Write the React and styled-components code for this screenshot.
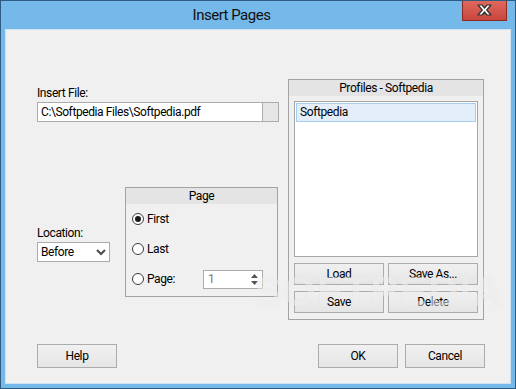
import styled, { createGlobalStyle } from 'styled-components';

const Global = createGlobalStyle`
  html, body { margin: 0; padding: 0; background: #ffffff; }
  * { box-sizing: border-box; }
`;

const ui = `Roboto, "Noto Sans", "Liberation Sans", sans-serif`;

// window chrome
const Window = styled.div`
  position: relative;
  width: 516px;
  height: 389px;
  border: 1px solid #2e5b7f;
  background: #75b9ea;
  display: flex;
  flex-direction: column;
  font-family: ${ui};
  font-size: 12px;
  letter-spacing: -0.4px;
  color: #000;
  overflow: hidden;
`;

const TitleBar = styled.div`
  height: 28px;
  display: flex;
  align-items: flex-start;
`;

const Title = styled.div`
  flex: 1;
  text-align: center;
  font-size: 15px;
  letter-spacing: -0.5px;
  line-height: 29px;
  color: #111;
`;

const CloseButton = styled.div`
  width: 45px;
  height: 21px;
  margin-top: -1px;
  margin-right: 8px;
  border: 1px solid #8a2a22;
  border-top: none;
  background: linear-gradient(#e06a60, #c9463c);
  display: flex;
  align-items: center;
  justify-content: center;
`;

const Client = styled.div`
  position: relative;
  flex: 1;
  margin: 0 4px 4px 4px;
  border: 1px solid #cfe3f3;
  background: #f0f0f0;
  padding: 49px 25px 0 31px;
  display: flex;
  flex-direction: column;
`;

// body
const Body = styled.div`
  display: flex;
  align-items: flex-start;
  gap: 9px;
`;

const LeftColumn = styled.div`
  width: 242px;
  padding-top: 7px;
  display: flex;
  flex-direction: column;
`;

const Label = styled.div`
  line-height: 15px;
  height: 15px;
  margin-bottom: 1px;
`;

const FileField = styled.div`
  height: 20px;
  display: flex;
  border: 1px solid #ababab;
  background: #fff;
`;

const FileText = styled.div`
  flex: 1;
  padding-left: 3px;
  line-height: 18px;
  white-space: nowrap;
  overflow: hidden;
`;

const BrowseSegment = styled.div`
  width: 16px;
  border-left: 1px solid #ababab;
  background: #e6e6e6;
`;

const LowerRow = styled.div`
  margin-top: 65px;
  display: flex;
  align-items: flex-start;
  gap: 15px;
`;

const LocationBlock = styled.div`
  width: 73px;
  margin-top: 39px;
  display: flex;
  flex-direction: column;
`;

const Select = styled.div`
  height: 20px;
  border: 1px solid #ababab;
  background: #fff;
  display: flex;
  align-items: center;
  justify-content: space-between;
  padding: 0 3px 0 3px;
  line-height: 18px;
`;

const Group = styled.div`
  width: ${(p) => p.w}px;
  height: ${(p) => p.h}px;
  border: 1px solid #a3a3a3;
  display: flex;
  flex-direction: column;
`;

const GroupHeader = styled.div`
  height: 16px;
  line-height: 16px;
  background: #e4e4e4;
  text-align: center;
`;

const RadioList = styled.div`
  display: flex;
  flex-direction: column;
  padding-left: 6px;
`;

const RadioRow = styled.div`
  height: 30px;
  display: flex;
  align-items: center;
`;

const RadioCircle = styled.span`
  width: 12px;
  height: 12px;
  border-radius: 50%;
  border: 1px solid #3c3c3c;
  background: #fff;
  display: flex;
  align-items: center;
  justify-content: center;
  margin-right: 3px;
  &::after {
    content: '';
    width: 6px;
    height: 6px;
    border-radius: 50%;
    background: ${(p) => (p.checked ? '#1a1a1a' : 'transparent')};
  }
`;

const RadioLabel = styled.span`
  width: ${(p) => (p.w ? `${p.w}px` : 'auto')};
`;

const SpinBox = styled.div`
  width: 60px;
  height: 19px;
  border: 1px solid #ababab;
  background: #fff;
  display: flex;
  align-items: center;
  justify-content: space-between;
  padding: 0 4px 0 4px;
  color: #7a7a7a;
`;

const SpinArrows = styled.div`
  display: flex;
  flex-direction: column;
  gap: 3px;
`;

// profiles
const ProfilesBody = styled.div`
  flex: 1;
  padding: 5px 5px 6px 5px;
  display: flex;
  flex-direction: column;
`;

const ProfileList = styled.div`
  height: 156px;
  border: 1px solid #a6a6a6;
  background: #fff;
  padding: 1px;
`;

const ProfileItem = styled.div`
  height: 19px;
  line-height: 17px;
  padding-left: 3px;
  background: ${(p) => (p.selected ? '#e3eefa' : 'transparent')};
  border: 1px solid ${(p) => (p.selected ? '#a4cdf0' : 'transparent')};
`;

const ButtonGrid = styled.div`
  margin-top: 6px;
  display: grid;
  grid-template-columns: 90px 90px;
  grid-auto-rows: 22px;
  column-gap: 4px;
  row-gap: 6px;
`;

const Button = styled.div`
  width: ${(p) => (p.w ? `${p.w}px` : 'auto')};
  height: ${(p) => (p.h ? `${p.h}px` : '100%')};
  border: 1px solid #acacac;
  background: linear-gradient(#f0f0f0, #e5e5e5);
  display: flex;
  align-items: center;
  justify-content: center;
`;

// footer
const Footer = styled.div`
  margin-top: 24px;
  display: flex;
  align-items: flex-start;
  gap: 7px;
`;

const Spacer = styled.div`
  flex: 1;
`;

const Watermark = styled.div`
  position: absolute;
  left: 248px;
  top: 238px;
  font-family: "Liberation Sans", sans-serif;
  font-weight: bold;
  font-size: 42px;
  letter-spacing: 1px;
  color: rgba(255, 255, 255, 0.5);
  text-shadow: 0 0 1px rgba(0, 0, 0, 0.08);
  pointer-events: none;
`;

const CloseGlyph = () => (
  <svg width="15" height="12" viewBox="0 0 15 12">
    <path
      d="M1 1 H5 L7.5 4 L10 1 H14 L9.7 6 L14 11 H10 L7.5 8 L5 11 H1 L5.3 6 Z"
      fill="#fff"
      stroke="#333"
      strokeWidth="1.2"
      strokeLinejoin="round"
    />
  </svg>
);

const Chevron = () => (
  <svg width="10" height="7" viewBox="0 0 10 7">
    <path d="M1 1 L5 5 L9 1" fill="none" stroke="#4a4a4a" strokeWidth="2" />
  </svg>
);

const Triangle = ({ up }) => (
  <svg width="7" height="4" viewBox="0 0 7 4">
    <path d={up ? 'M0 4 L3.5 0 L7 4 Z' : 'M0 0 L3.5 4 L7 0 Z'} fill="#555" />
  </svg>
);

export default function App() {
  return (
    <>
      <Global />
      <Window>
        <TitleBar>
          <Title>Insert Pages</Title>
          <CloseButton>
            <CloseGlyph />
          </CloseButton>
        </TitleBar>
        <Client>
          <Body>
            <LeftColumn>
              <Label>Insert File:</Label>
              <FileField>
                <FileText>C:\Softpedia Files\Softpedia.pdf</FileText>
                <BrowseSegment />
              </FileField>
              <LowerRow>
                <LocationBlock>
                  <Label>Location:</Label>
                  <Select>
                    <span>Before</span>
                    <Chevron />
                  </Select>
                </LocationBlock>
                <Group w={153} h={110}>
                  <GroupHeader>Page</GroupHeader>
                  <RadioList>
                    <RadioRow>
                      <RadioCircle checked />
                      <RadioLabel>First</RadioLabel>
                    </RadioRow>
                    <RadioRow>
                      <RadioCircle />
                      <RadioLabel>Last</RadioLabel>
                    </RadioRow>
                    <RadioRow>
                      <RadioCircle />
                      <RadioLabel w={56}>Page:</RadioLabel>
                      <SpinBox>
                        <span>1</span>
                        <SpinArrows>
                          <Triangle up />
                          <Triangle />
                        </SpinArrows>
                      </SpinBox>
                    </RadioRow>
                  </RadioList>
                </Group>
              </LowerRow>
            </LeftColumn>
            <Group w={196} h={241}>
              <GroupHeader>Profiles - Softpedia</GroupHeader>
              <ProfilesBody>
                <ProfileList>
                  <ProfileItem selected>Softpedia</ProfileItem>
                </ProfileList>
                <ButtonGrid>
                  <Button>Load</Button>
                  <Button>Save As...</Button>
                  <Button>Save</Button>
                  <Button>Delete</Button>
                </ButtonGrid>
              </ProfilesBody>
            </Group>
          </Body>
          <Footer>
            <Button w={80} h={24}>Help</Button>
            <Spacer />
            <Button w={80} h={24}>OK</Button>
            <Button w={80} h={24}>Cancel</Button>
          </Footer>
          <Watermark>SOFTPEDIA</Watermark>
        </Client>
      </Window>
    </>
  );
}
